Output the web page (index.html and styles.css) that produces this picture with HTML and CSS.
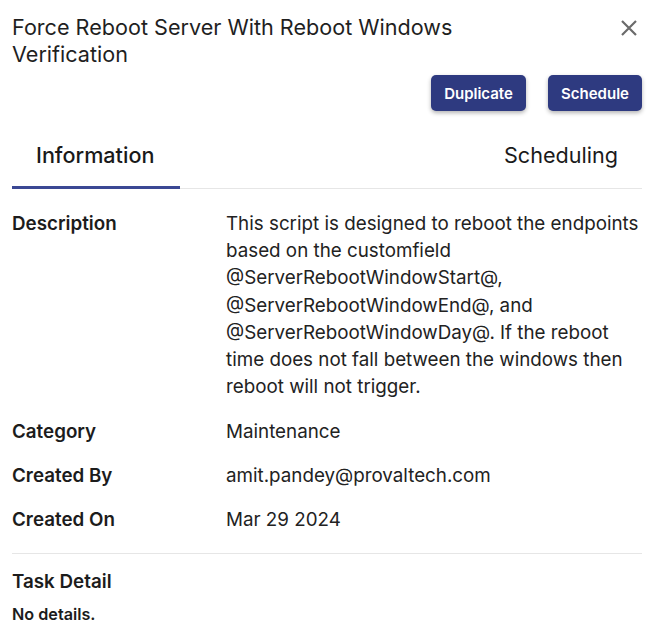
FILE: index.html
```html
<!DOCTYPE html>
<html>
<head>
<meta charset="utf-8">
<link rel="stylesheet" href="styles.css">
</head>
<body>
<div class="panel">
  <div class="header">
    <h1 class="title">Force Reboot Server With Reboot Windows Verification</h1>
    <button class="close" aria-label="Close">
      <svg width="18" height="18" viewBox="0 0 18 18"><path d="M2 2 L16 16 M16 2 L2 16" stroke="#6b6b6b" stroke-width="2.2" stroke-linecap="butt" fill="none"/></svg>
    </button>
  </div>
  <div class="actions">
    <button class="btn">Duplicate</button>
    <button class="btn">Schedule</button>
  </div>
  <div class="tabs">
    <div class="tab active">Information</div>
    <div class="tab">Scheduling</div>
  </div>
  <div class="rows">
    <div class="row">
      <div class="label">Description</div>
      <div class="value">This script is designed to reboot the endpoints based on the customfield @ServerRebootWindowStart@, @ServerRebootWindowEnd@, and @ServerRebootWindowDay@. If the reboot time does not fall between the windows then reboot will not trigger.</div>
    </div>
    <div class="row">
      <div class="label">Category</div>
      <div class="value">Maintenance</div>
    </div>
    <div class="row">
      <div class="label">Created By</div>
      <div class="value">amit.pandey@provaltech.com</div>
    </div>
    <div class="row">
      <div class="label">Created On</div>
      <div class="value">Mar 29 2024</div>
    </div>
  </div>
  <div class="task">
    <div class="task-title">Task Detail</div>
    <div class="task-body">No details.</div>
  </div>
</div>
</body>
</html>
```
FILE: styles.css
```css
* { box-sizing: border-box; }
html, body { margin: 0; padding: 0; background: #fff; }
body { font-family: Inter, "Noto Sans", sans-serif; color: #1c1c1c; }
.panel { width: 658px; padding: 14px 16px 0 12px; }
.header { display: flex; justify-content: space-between; align-items: flex-start; }
.title { margin: 0; font-size: 21.6px; font-weight: 400; line-height: 27px; width: 480px; color: #1f1f1f; }
.close { border: 0; background: none; padding: 0; margin: 5px 4px 0 0; width: 18px; height: 18px; display: flex; }
.actions { display: flex; justify-content: flex-end; gap: 22px; margin-top: 7px; }
.btn { background: #2e3a80; color: #fff; border: 0; border-radius: 5px; height: 36px; padding: 0; font-family: Inter, sans-serif; font-size: 15px; font-weight: 600; box-shadow: 0 2px 4px rgba(0,0,0,0.3); }
.btn:first-child { width: 95px; }
.btn:last-child { width: 94px; }
.tabs { display: flex; justify-content: space-between; margin-top: 18px; border-bottom: 1px solid #e6e6e6; }
.tab { font-size: 21.6px; line-height: 24px; padding: 14px 24px 19px; color: #1a1a1a; }
.tab.active { font-weight: 500; border-bottom: 3px solid #3b4894; margin-bottom: -1px; width: 168px; padding-right: 0; }
.rows { padding-top: 21px; padding-bottom: 20px; border-bottom: 1px solid #e6e6e6; }
.row { display: flex; margin-bottom: 17px; }
.row:first-child { margin-bottom: 18px; }
.row:last-child { margin-bottom: 0; }
.label { width: 214px; font-size: 18.8px; font-weight: 600; line-height: 27px; flex-shrink: 0; }
.value { font-size: 18.8px; line-height: 27px; color: #222; }
.row:first-child .value { line-height: 27.2px; }
.task { padding-top: 16px; }
.task-title { font-size: 18.8px; font-weight: 600; line-height: 24px; }
.task-body { font-size: 16.2px; font-weight: 600; margin-top: 10px; }
```
